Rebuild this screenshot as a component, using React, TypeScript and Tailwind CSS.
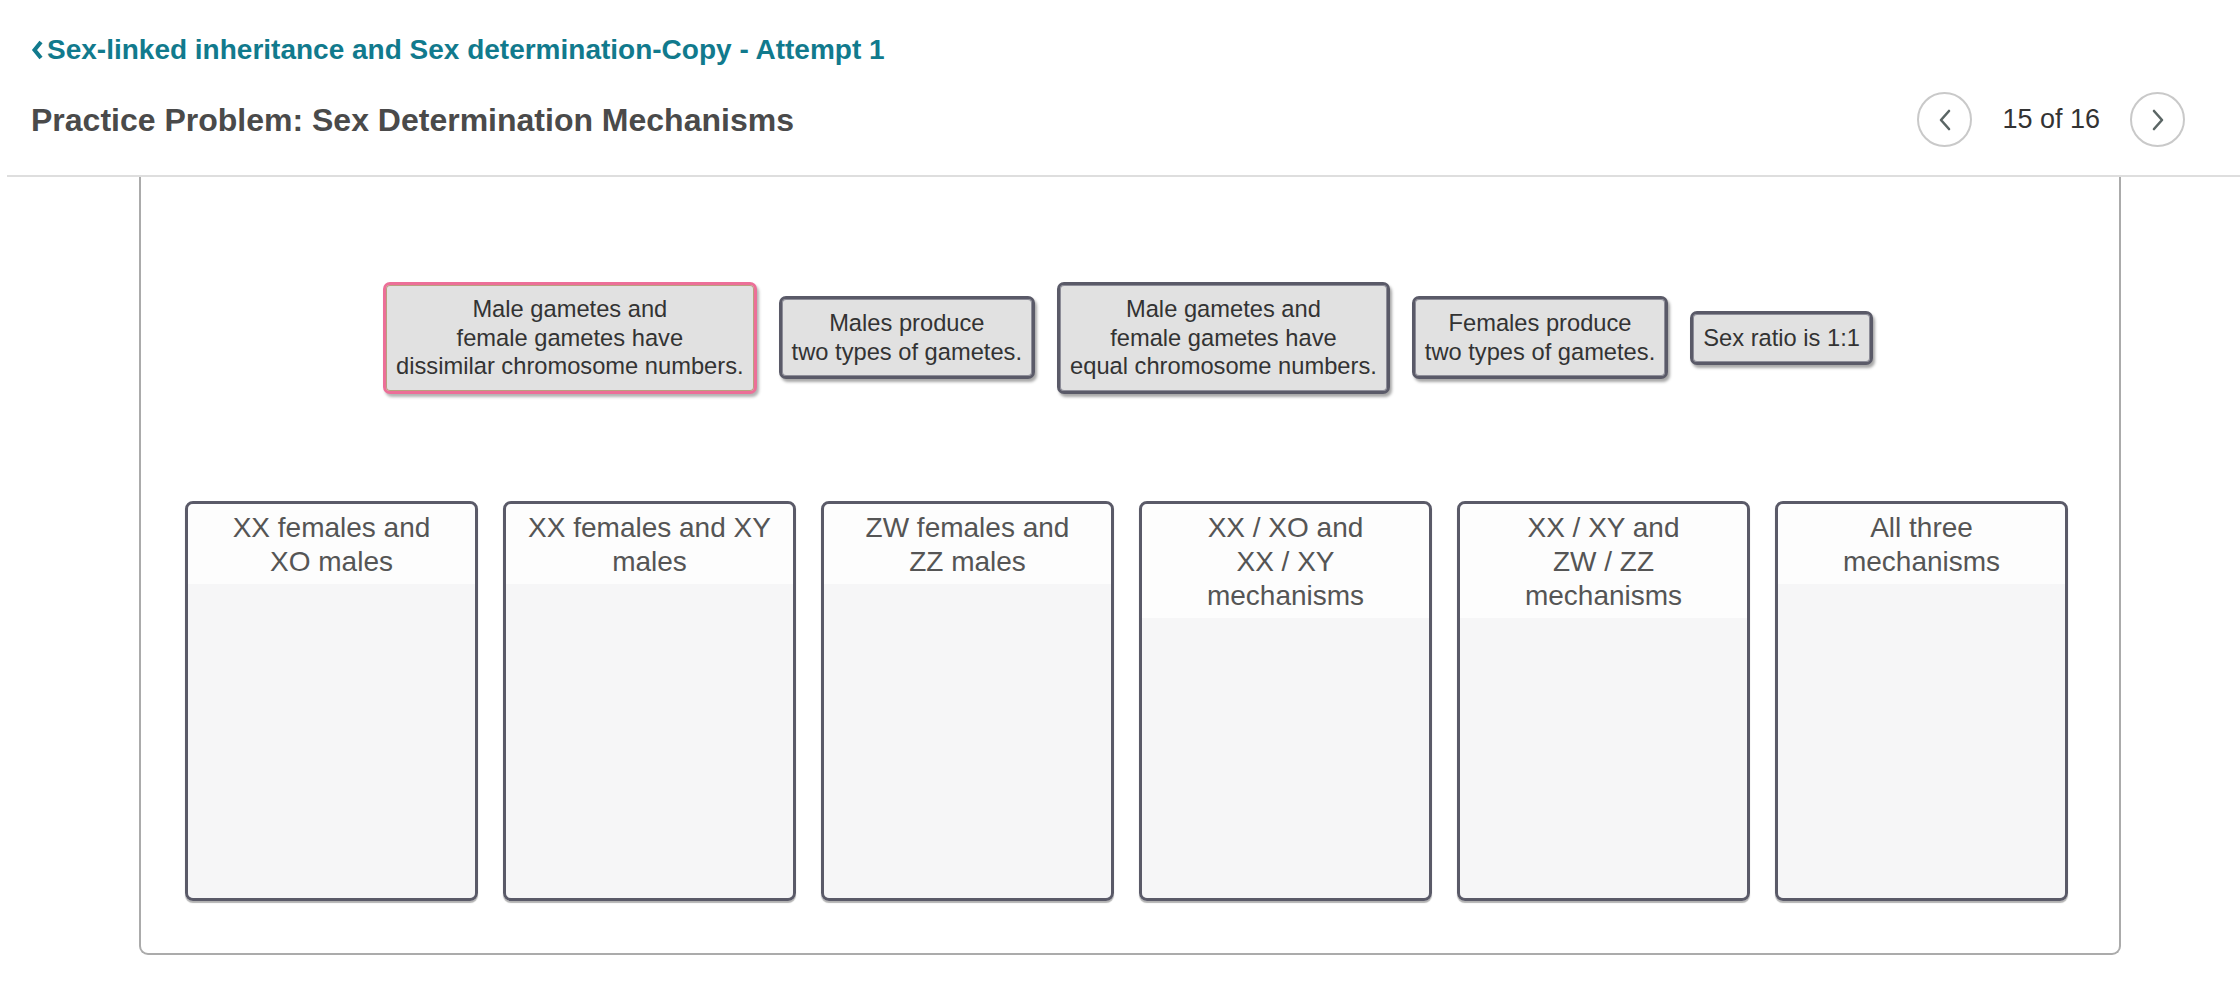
import React from "react";

const cards: { lines: string[]; selected?: boolean }[] = [
  { lines: ["Male gametes and", "female gametes have", "dissimilar chromosome numbers."], selected: true },
  { lines: ["Males produce", "two types of gametes."] },
  { lines: ["Male gametes and", "female gametes have", "equal chromosome numbers."] },
  { lines: ["Females produce", "two types of gametes."] },
  { lines: ["Sex ratio is 1:1"] },
];

const zones: string[][] = [
  ["XX females and", "XO males"],
  ["XX females and XY", "males"],
  ["ZW females and", "ZZ males"],
  ["XX / XO and", "XX / XY", "mechanisms"],
  ["XX / XY and", "ZW / ZZ", "mechanisms"],
  ["All three", "mechanisms"],
];

function Chevron({ dir }: { dir: "left" | "right" }) {
  return (
    <svg width="16" height="24" viewBox="0 0 16 24" fill="none">
      <polyline
        points={dir === "left" ? "12,3 4,12 12,21" : "4,3 12,12 4,21"}
        stroke="#5b6665"
        strokeWidth="2.6"
        strokeLinecap="round"
        strokeLinejoin="round"
      />
    </svg>
  );
}

function Card({ lines, selected }: { lines: string[]; selected?: boolean }) {
  return (
    <div
      className={
        selected
          ? "rounded-[7px] border-[3px] border-[#ec6f98] bg-[#e1e1e1] px-[10px] py-[10px] text-center shadow-[inset_0_0_0_1px_#b9a07f,2px_3px_3px_rgba(0,0,0,0.3)]"
          : "rounded-[7px] border-[3px] border-[#5a5a68] bg-[#e1e1e1] px-[10px] py-[10px] text-center shadow-[inset_0_0_0_1px_#8d8d98,2px_3px_3px_rgba(0,0,0,0.35)]"
      }
    >
      {lines.map((l) => (
        <div key={l} className="whitespace-nowrap text-[23.7px] leading-[28.5px] text-[#333]">
          {l}
        </div>
      ))}
    </div>
  );
}

function Zone({ lines }: { lines: string[] }) {
  return (
    <div className="flex h-[400px] w-[293px] flex-col overflow-hidden rounded-[8px] border-[3px] border-[#5a5a68] shadow-[inset_0_0_0_1px_#9090a0,0_2px_1px_rgba(0,0,0,0.3)]">
      <div className="bg-[#fdfdfd] px-2 pt-[7px] pb-[5px] text-center">
        {lines.map((l) => (
          <div key={l} className="whitespace-nowrap text-[28px] leading-[34px] text-[#555]">
            {l}
          </div>
        ))}
      </div>
      <div className="flex-1 bg-[#f6f6f7]" />
    </div>
  );
}

export default function App() {
  return (
    <div className="min-h-[988px] w-full bg-white font-['Liberation_Sans',Arial,sans-serif]">
      <header className="ml-[7px] border-b-2 border-[#dedede] pl-[24px] pr-[55px] pt-[36px] pb-[28px]">
        <a href="#" className="flex items-center gap-[3px] text-[28px] font-bold leading-[28px] text-[#117a8d]">
          <svg width="13" height="22" viewBox="0 0 13 22" fill="none">
            <polyline points="10,3 3.5,11 10,19" stroke="#117a8d" strokeWidth="4" strokeLinejoin="miter" />
          </svg>
          Sex-linked inheritance and Sex determination-Copy - Attempt 1
        </a>
        <div className="mt-[28px] flex items-center justify-between">
          <h1 className="text-[32px] font-bold leading-[36px] text-[#4a4a4a]">
            Practice Problem: Sex Determination Mechanisms
          </h1>
          <div className="flex items-center gap-[30px]">
            <button className="flex h-[55px] w-[55px] items-center justify-center rounded-full border-2 border-[#c9c9c9]">
              <Chevron dir="left" />
            </button>
            <span className="text-[27px] text-[#333]">15 of 16</span>
            <button className="flex h-[55px] w-[55px] items-center justify-center rounded-full border-2 border-[#c9c9c9]">
              <Chevron dir="right" />
            </button>
          </div>
        </div>
      </header>

      <main className="ml-[139px] w-[1982px] rounded-b-[9px] border-2 border-t-0 border-[#ababab] pt-[105px] pb-[52px]">
        <div className="flex items-center justify-center gap-[22px] pr-[4px]">
          {cards.map((c, i) => (
            <Card key={i} lines={c.lines} selected={c.selected} />
          ))}
        </div>
        <div className="mt-[107px] flex justify-center gap-[25px] pr-[7px]">
          {zones.map((z, i) => (
            <Zone key={i} lines={z} />
          ))}
        </div>
      </main>
    </div>
  );
}
